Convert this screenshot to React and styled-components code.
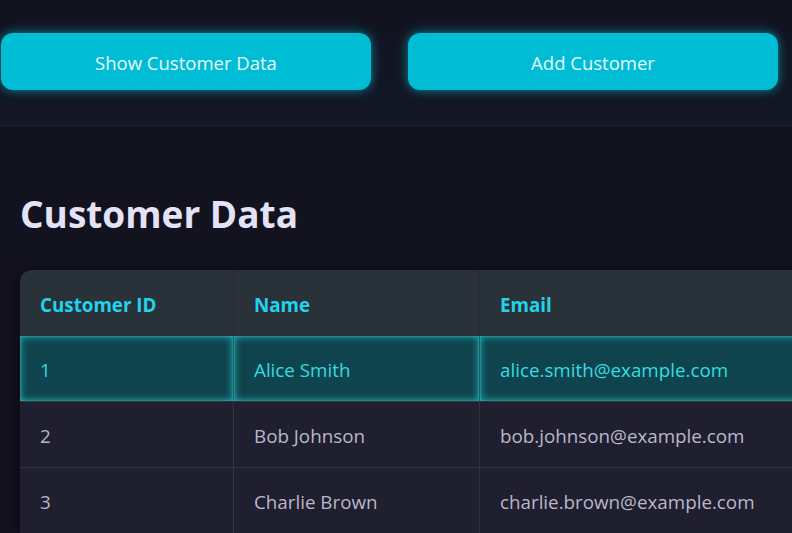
import React from "react";
import styled, { createGlobalStyle } from "styled-components";

const CYAN = "#00bcd4";
const FONT = `"Open Sans", "Noto Sans", "DejaVu Sans", sans-serif`;

const GlobalStyle = createGlobalStyle`
  html, body {
    margin: 0;
    padding: 0;
    background: #13121f;
    font-family: ${FONT};
    overflow: hidden;
  }
`;

const Page = styled.div`
  width: 792px;
  height: 533px;
  overflow: hidden;
  background: #13121f;
`;

const TopBar = styled.header`
  height: 126px;
  box-sizing: border-box;
  padding: 33px 0 0 1px;
  display: grid;
  grid-template-columns: 370px 370px;
  column-gap: 37px;
  align-items: start;
  background: linear-gradient(180deg, #12121e 0%, #131726 100%);
  border-bottom: 1px solid rgba(0, 188, 212, 0.12);
`;

const ActionButton = styled.button`
  height: 57px;
  border: none;
  border-radius: 12px;
  background: ${CYAN};
  color: #e6fbff;
  font-family: ${FONT};
  font-size: 18.5px;
  padding-top: 2px;
  cursor: pointer;
  box-shadow: 0 0 10px rgba(0, 188, 212, 0.55), 0 0 18px rgba(0, 188, 212, 0.2);
`;

const Main = styled.main`
  padding: 60px 0 0 20px;
`;

const Title = styled.h1`
  margin: 0 0 28px 0;
  font-size: 37px;
  font-weight: 700;
  line-height: 56px;
  color: #e3e2f7;
`;

const Table = styled.table`
  width: 820px;
  border-collapse: separate;
  border-spacing: 0;
  border-radius: 12px 0 0 0;
  overflow: hidden;
  box-shadow: -4px 0 10px rgba(0, 0, 0, 0.35);
`;

const Th = styled.th`
  height: 66px;
  box-sizing: border-box;
  padding: 3px 20px 0;
  text-align: left;
  background: #293238;
  color: #22d3ee;
  font-size: 18.8px;
  font-weight: 700;
  border-right: 1px solid #262a32;
  width: ${({ $w }) => $w}px;
`;

const Td = styled.td`
  height: 66px;
  box-sizing: border-box;
  padding: 2px 20px 0;
  font-size: 18.8px;
  border-right: 1px solid ${({ $active }) => ($active ? "#1f5f66" : "#33323f")};
  border-bottom: 1px solid #33323f;
  background: ${({ $active }) => ($active ? "#0f434d" : "#201f30")};
  color: ${({ $active }) => ($active ? "#33dde2" : "#b9b8c9")};
  box-shadow: ${({ $active }) =>
    $active
      ? "inset 0 0 9px rgba(40, 200, 205, 0.85), inset 0 0 2px rgba(40, 205, 210, 1)"
      : "none"};
`;

const customers = [
  { id: 1, name: "Alice Smith", email: "alice.smith@example.com" },
  { id: 2, name: "Bob Johnson", email: "bob.johnson@example.com" },
  { id: 3, name: "Charlie Brown", email: "charlie.brown@example.com" },
];

export default function App() {
  return (
    <Page>
      <GlobalStyle />
      <TopBar>
        <ActionButton>Show Customer Data</ActionButton>
        <ActionButton>Add Customer</ActionButton>
      </TopBar>
      <Main>
        <Title>Customer Data</Title>
        <Table>
          <thead>
            <tr>
              <Th $w={214}>Customer ID</Th>
              <Th $w={246}>Name</Th>
              <Th $w={360}>Email</Th>
            </tr>
          </thead>
          <tbody>
            {customers.map((c, i) => (
              <tr key={c.id}>
                <Td $active={i === 0}>{c.id}</Td>
                <Td $active={i === 0}>{c.name}</Td>
                <Td $active={i === 0}>{c.email}</Td>
              </tr>
            ))}
          </tbody>
        </Table>
      </Main>
    </Page>
  );
}
